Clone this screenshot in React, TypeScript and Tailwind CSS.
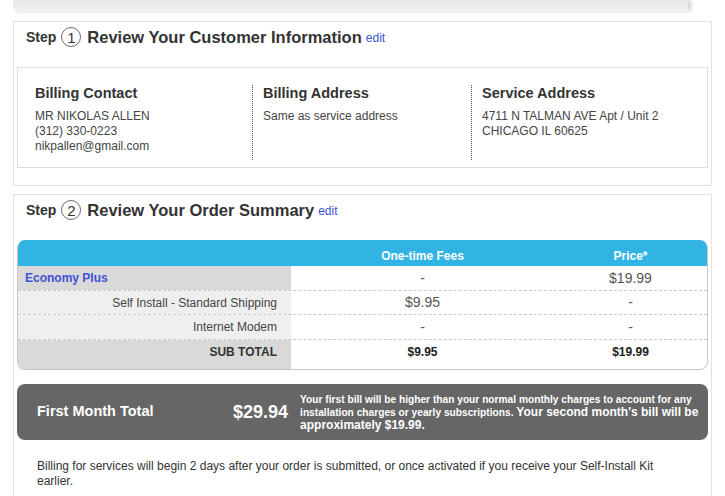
import React from "react";

const font = { fontFamily: '"Liberation Sans", Arial, Helvetica, sans-serif' };

function StepTitle({ n, title }: { n: string; title: string }) {
  return (
    <div className="flex h-[22px] items-center pl-[9px] text-[#333]">
      <span className="text-[14px] font-bold">Step</span>
      <span className="ml-[5px] flex h-[20px] w-[20px] items-center justify-center rounded-full border-[1.5px] border-[#6a6a6a] text-[15px] leading-none text-[#333]">
        {n}
      </span>
      <span className="ml-[6px] text-[16.5px] font-bold">{title}</span>
      <span className="ml-[4px] mt-[2px] text-[12px] text-[#3a55d0]">edit</span>
    </div>
  );
}

export default function App() {
  return (
    <div className="min-h-[496px] w-[725px] bg-white" style={font}>
      <div className="ml-[13px] h-[11px] w-[675px] bg-gradient-to-b from-[#e6e6e6] to-[#f2f2f2] shadow-[3px_0_4px_rgba(0,0,0,0.18)]" />

      {/* Step 1 */}
      <div className="ml-[13px] mt-[10px] w-[699px] border border-[#e2e2e2] px-[3px] pb-[17px] pt-[4px]">
        <StepTitle n="1" title="Review Your Customer Information" />
        <div className="mt-[19px] border border-[#dedede] pb-[7px] pt-[17px]">
          <div className="flex h-[75px]">
            <div className="w-[234px] pl-[17px]">
              <div className="text-[14.5px] font-bold leading-[16px] text-[#333]">Billing Contact</div>
              <div className="mt-[8px] text-[12px] leading-[15px] text-[#444]">
                <div>MR NIKOLAS ALLEN</div>
                <div>(312) 330-0223</div>
                <div>nikpallen@gmail.com</div>
              </div>
            </div>
            <div className="w-[219px] border-l border-dotted border-[#555] pl-[10px]">
              <div className="text-[14.5px] font-bold leading-[16px] text-[#333]">Billing Address</div>
              <div className="mt-[8px] text-[12px] leading-[15px] text-[#444]">Same as service address</div>
            </div>
            <div className="flex-1 border-l border-dotted border-[#555] pl-[10px]">
              <div className="text-[14.5px] font-bold leading-[16px] text-[#333]">Service Address</div>
              <div className="mt-[8px] text-[12px] leading-[15px] text-[#444]">
                <div>4711 N TALMAN AVE Apt / Unit 2</div>
                <div>CHICAGO IL 60625</div>
              </div>
            </div>
          </div>
        </div>
      </div>

      {/* Step 2 */}
      <div className="ml-[13px] mt-[8px] w-[699px] border border-b-0 border-[#e2e2e2] px-[3px] pb-[30px] pt-[4px]">
        <StepTitle n="2" title="Review Your Order Summary" />

        <div className="mt-[19px] overflow-hidden rounded-[8px] border-b border-l border-r border-[#c8c8c8]">
          <div className="flex h-[26px] items-end bg-[#31b4e4] pb-[3px] text-[12px] font-bold leading-[14px] text-white">
            <div className="w-[273px]" />
            <div className="w-[263px] text-center">One-time Fees</div>
            <div className="flex-1 text-center">Price*</div>
          </div>
          <div className="flex h-[24px] items-center">
            <div className="flex h-full w-[273px] items-center bg-[#d9d9d9] pl-[7px] text-[12px] font-bold text-[#3f51d4]">
              Economy Plus
            </div>
            <div className="w-[263px] text-center text-[14px] text-[#555]">-</div>
            <div className="flex-1 text-center text-[14px] text-[#555]">$19.99</div>
          </div>
          <div className="flex h-[24px] items-center border-t border-dashed border-[#c8c8c8]">
            <div className="flex h-full w-[273px] items-center justify-end bg-[#efefef] pr-[14px] text-[12px] text-[#444]">
              Self Install - Standard Shipping
            </div>
            <div className="w-[263px] text-center text-[14px] text-[#555]">$9.95</div>
            <div className="flex-1 text-center text-[14px] text-[#555]">-</div>
          </div>
          <div className="flex h-[25px] items-center border-t border-dashed border-[#c8c8c8]">
            <div className="flex h-full w-[273px] items-center justify-end bg-[#efefef] pr-[14px] text-[12px] text-[#444]">
              Internet Modem
            </div>
            <div className="w-[263px] text-center text-[14px] text-[#555]">-</div>
            <div className="flex-1 text-center text-[14px] text-[#555]">-</div>
          </div>
          <div className="flex h-[30px] border-t border-dashed border-[#c8c8c8] text-[12px] font-bold">
            <div className="flex h-full w-[273px] items-center justify-end bg-[#d9d9d9] pb-[6px] pr-[14px] text-[#333]">
              SUB TOTAL
            </div>
            <div className="flex w-[263px] items-center justify-center pb-[6px] text-[#222]">$9.95</div>
            <div className="flex flex-1 items-center justify-center pb-[6px] text-[#222]">$19.99</div>
          </div>
        </div>

        <div className="mt-[14px] flex h-[56px] items-center rounded-[8px] bg-[#666666] pl-[20px] text-white">
          <div className="w-[196px] text-[14.5px] font-bold">First Month Total</div>
          <div className="text-[18px] font-bold">$29.94</div>
          <div className="ml-[12px] text-[10.2px] font-bold leading-[13px]">
            Your first bill will be higher than your normal monthly charges to account for any
            <br />
            installation charges or yearly subscriptions.{" "}
            <span className="text-[12px]">
              Your second month's bill will be
              <br />
              approximately $19.99.
            </span>
          </div>
        </div>

        <p className="mt-[19px] pl-[20px] pr-[36px] text-[12px] leading-[15px] text-[#333]">
          Billing for services will begin 2 days after your order is submitted, or once activated if you receive your Self-Install Kit earlier.
        </p>
      </div>
    </div>
  );
}
